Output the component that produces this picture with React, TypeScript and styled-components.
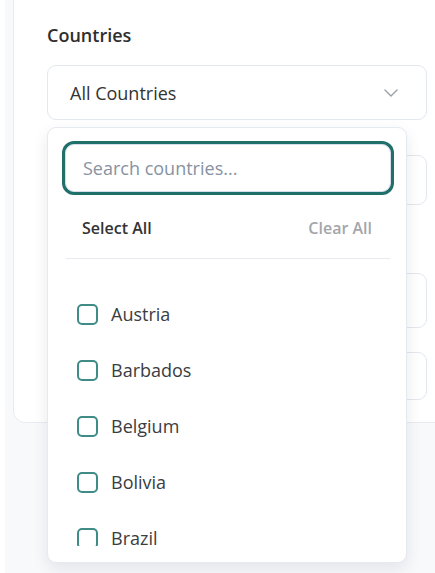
import { createGlobalStyle, styled } from 'styled-components';

const GlobalStyle = createGlobalStyle`
  html, body {
    margin: 0;
    padding: 0;
    background: #ffffff;
  }
  body {
    font-family: "Open Sans", "Noto Sans", sans-serif;
    color: #333333;
  }
  * {
    box-sizing: border-box;
  }
`;

const countries = ['Austria', 'Barbados', 'Belgium', 'Bolivia', 'Brazil'];

const ChevronIcon = () => (
  <svg width="14" height="8" viewBox="0 0 14 8" fill="none">
    <polyline points="1,1 7,7 13,1" stroke="#9aa0a8" strokeWidth="1.4" strokeLinecap="round" strokeLinejoin="round" />
  </svg>
);

const CountryDropdown = () => {
  return (
    <Panel>
      <SearchInput type="text" placeholder="Search countries..." autoFocus />
      <ActionRow>
        <SelectAllButton>Select All</SelectAllButton>
        <ClearAllButton>Clear All</ClearAllButton>
      </ActionRow>
      <Divider />
      <OptionList>
        {countries.map(name => (
          <OptionItem key={name}>
            <CheckBox />
            <span>{name}</span>
          </OptionItem>
        ))}
      </OptionList>
    </Panel>
  );
};

function App() {
  return (
    <>
      <GlobalStyle />
      <PageArea>
        <FilterCard>
          <FieldLabel>Countries</FieldLabel>
          <SelectWrap>
            <SelectBox>
              <span>All Countries</span>
              <ChevronIcon />
            </SelectBox>
            <CountryDropdown />
          </SelectWrap>
          <FieldBox $top={35} $height={50} />
          <FieldBox $top={68} $height={55} />
          <FieldBox $top={24} $height={48} />
        </FilterCard>
      </PageArea>
    </>
  );
}

export default App;

const PageArea = styled.div`
  margin-left: 5px;
  height: 573px;
  background: #f8f9fb;
  padding-left: 8px;
  overflow: hidden;
`;

const FilterCard = styled.div`
  width: 448px;
  margin-top: -20px;
  background: #ffffff;
  border: 1px solid #e8ebf0;
  border-radius: 12px;
  padding: 42px 33px 22px 33px;
`;

const FieldLabel = styled.div`
  font-size: 18px;
  font-weight: 600;
  line-height: 24px;
  color: #2e2e2e;
  margin-bottom: 18px;
`;

const SelectWrap = styled.div`
  position: relative;
`;

const SelectBox = styled.div`
  height: 55px;
  display: flex;
  align-items: center;
  justify-content: space-between;
  padding: 0 28px 0 22px;
  border: 1px solid #e3e8ef;
  border-radius: 9px;
  font-size: 18px;
  color: #333333;
  background: #ffffff;
`;

const FieldBox = styled.div<{ $top: number; $height: number }>`
  margin-top: ${p => p.$top}px;
  height: ${p => p.$height}px;
  border: 1px solid #e3e8ef;
  border-radius: 9px;
  background: #ffffff;
`;

const Panel = styled.div`
  position: absolute;
  top: calc(100% + 7px);
  left: 0;
  width: 360px;
  height: 436px;
  z-index: 10;
  display: flex;
  flex-direction: column;
  padding: 16px 15px 16px 17px;
  background: #ffffff;
  border: 1px solid #e5e9f0;
  border-radius: 9px;
  box-shadow: 0 6px 16px rgba(15, 23, 42, 0.09);
`;

const SearchInput = styled.input`
  height: 48px;
  width: 100%;
  flex-shrink: 0;
  padding: 0 12px 0 17px;
  border: 1px solid #d6dde8;
  border-radius: 9px;
  box-shadow: 0 0 0 3px #1f6f6a;
  outline: none;
  font-family: "Open Sans", "Noto Sans", sans-serif;
  font-size: 18px;
  color: #333333;
  caret-color: #333333;
  &::placeholder {
    color: #8792a2;
  }
`;

const ActionRow = styled.div`
  margin-top: 16px;
  height: 40px;
  flex-shrink: 0;
  display: flex;
  align-items: center;
  justify-content: space-between;
  padding: 0 19px 0 17px;
  font-size: 16px;
  font-weight: 600;
`;

const SelectAllButton = styled.span`
  color: #333333;
`;

const ClearAllButton = styled.span`
  color: #a3a6ab;
`;

const Divider = styled.div`
  margin: 10px 1px 0 1px;
  height: 1px;
  flex-shrink: 0;
  background: #e6e9ee;
`;

const OptionList = styled.div`
  flex: 1;
  overflow: hidden;
  padding-top: 27px;
`;

const OptionItem = styled.div`
  height: 56px;
  flex-shrink: 0;
  display: flex;
  align-items: center;
  gap: 13px;
  padding-left: 12px;
  font-size: 18px;
  color: #3a3d42;
`;

const CheckBox = styled.span`
  width: 21px;
  height: 21px;
  flex-shrink: 0;
  border: 2px solid #3f8b86;
  border-radius: 5px;
  background: #ffffff;
`;
